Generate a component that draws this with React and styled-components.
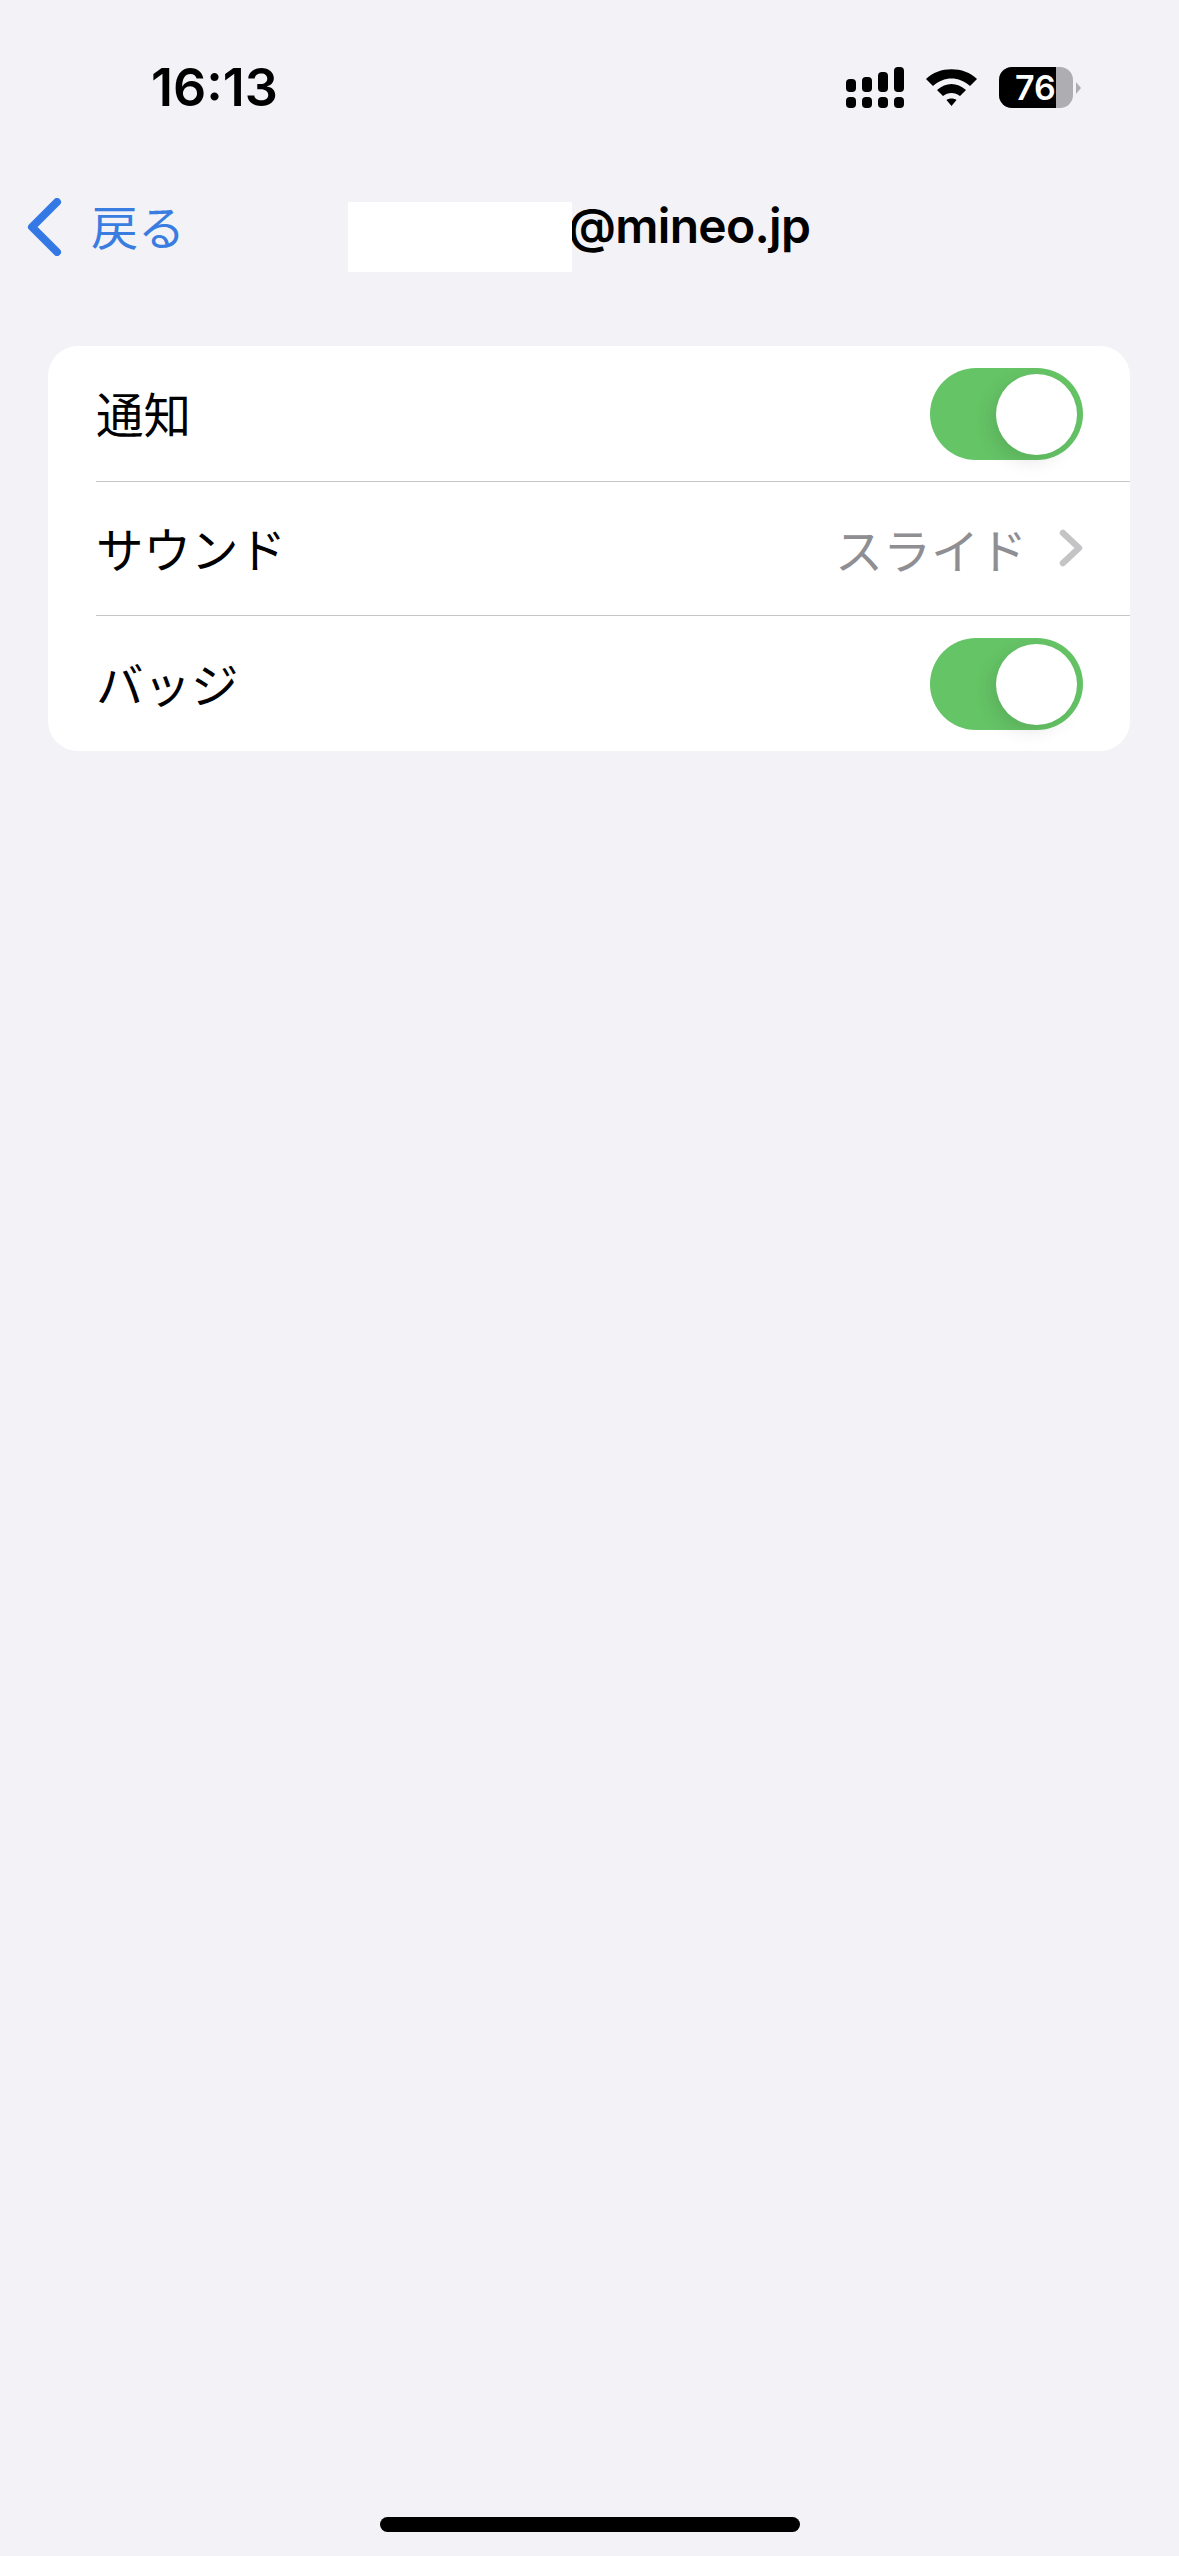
import React from 'react';
import styled, { createGlobalStyle } from 'styled-components';

const GlobalStyle = createGlobalStyle`
    html, body {
        margin: 0;
        padding: 0;
        background: #f2f2f7;
    }
`
const Screen = styled.div`
    width: 1179px;
    height: 2556px;
    display: flex;
    flex-direction: column;
    background: #f2f2f7;
    font-family: Inter, "Noto Sans CJK JP", sans-serif;
    overflow: hidden;
`
const StatusBar = styled.div`
    height: 41px;
    padding: 67px 98px 0 151px;
    display: flex;
    align-items: center;
    justify-content: space-between;
`
const Time = styled.div`
    font-size: 52px;
    font-weight: 600;
    color: #000;
`
const StatusIcons = styled.div`
    display: flex;
    align-items: center;
    gap: 22px;
`
const BatteryGroup = styled.div`
    display: flex;
    align-items: center;
    gap: 3px;
`
const Battery = styled.div`
    width: 74px;
    height: 41px;
    border-radius: 13px;
    overflow: hidden;
    background: #aeaeb2;
`
const BatteryFill = styled.div`
    width: 57px;
    height: 41px;
    padding-left: 16px;
    box-sizing: border-box;
    overflow: hidden;
    white-space: nowrap;
    line-height: 41px;
    font-size: 34px;
    font-weight: 600;
    background: #000;
    color: #fff;
`
const BatteryCap = styled.div`
    width: 0;
    height: 0;
    border-left: 5px solid #aeaeb2;
    border-top: 6px solid transparent;
    border-bottom: 6px solid transparent;
`
const NavBar = styled.div`
    height: 110px;
    margin-top: 64px;
    display: flex;
    align-items: center;
    padding-left: 27px;
`
const BackLabel = styled.span`
    width: 92px;
    margin: 0 0 5px 28px;
    font-family: "Noto Sans CJK JP", sans-serif;
    font-size: 47px;
    white-space: nowrap;
    color: #3a7de0;
`
const Title = styled.div`
    margin-left: 165px;
    display: flex;
    align-items: center;
    color: #000;
`
const Redaction = styled.span`
    position: relative;
    z-index: 1;
    width: 224px;
    height: 70px;
    margin-top: 20px;
    background: #fff;
`
const TitleText = styled.span`
    margin: 0 0 4px -4px;
    font-size: 48px;
    font-weight: 600;
    letter-spacing: -0.7px;
`
const Card = styled.div`
    margin: 64px 49px 0 48px;
    background: #fff;
    border-radius: 30px;
    overflow: hidden;
`
const Row = styled.div`
    height: ${p => p.$height}px;
    box-sizing: border-box;
    margin-left: 48px;
    padding-right: 47px;
    display: flex;
    align-items: center;
    justify-content: space-between;
    border-bottom: ${p => (p.$last ? 'none' : '1px solid #c6c6c8')};
`
const Label = styled.span`
    margin-bottom: 2px;
    font-family: "Noto Sans CJK JP", sans-serif;
    font-size: 47.5px;
    color: #000;
`
const Value = styled.span`
    display: flex;
    align-items: center;
    gap: 32px;
    margin-bottom: 1px;
    font-family: "Noto Sans CJK JP", sans-serif;
    font-size: 48px;
    color: #8e8e93;
`
const Toggle = styled.div`
    width: 153px;
    height: 92px;
    padding: 6px 6px 5px;
    box-sizing: border-box;
    display: flex;
    justify-content: flex-end;
    border-radius: 46px;
    background: #65c466;
`
const Knob = styled.div`
    width: 81px;
    height: 81px;
    border-radius: 50%;
    background: #fff;
    box-shadow: -6px 6px 18px rgba(0, 0, 0, 0.1);
`
const Spacer = styled.div`
    flex: 1;
`
const HomeBar = styled.div`
    width: 420px;
    height: 15px;
    margin: 0 auto 24px;
    border-radius: 8px;
    background: #000;
`

function SignalIcon() {
    return (
        <svg width="58" height="41" viewBox="0 0 58 41">
            <rect x="0" y="12" width="10" height="13" rx="4" />
            <rect x="16" y="10" width="10" height="15" rx="4" />
            <rect x="32" y="5" width="10" height="20" rx="4" />
            <rect x="48" y="0" width="10" height="25" rx="4" />
            <rect x="0" y="30" width="10" height="11" rx="4" />
            <rect x="16" y="30" width="10" height="11" rx="4" />
            <rect x="32" y="30" width="10" height="11" rx="4" />
            <rect x="48" y="30" width="10" height="11" rx="4" />
        </svg>
    )
}

function WifiIcon() {
    return (
        <svg width="51" height="37" viewBox="0 0 51 37">
            <path d="M0 10 C13 -3 38 -3 51 10 L44 17 C33 7 18 7 7 17 Z" />
            <path d="M11 21 C20 13 31 13 40 21 L34 27 C29 23 22 23 17 27 Z" />
            <path d="M20.5 31 C23 29 28 29 30.5 31 L25.5 37 Z" />
        </svg>
    )
}

function BackChevron() {
    return (
        <svg width="36" height="58" viewBox="0 0 36 58">
            <path d="M30 4 L5 29 L30 54" fill="none" stroke="#3478e5" strokeWidth="8" strokeLinecap="round" strokeLinejoin="round" />
        </svg>
    )
}

function RowChevron() {
    return (
        <svg width="24" height="38" viewBox="0 0 24 38">
            <path d="M4 4 L20 19 L4 34" fill="none" stroke="#c4c4c7" strokeWidth="6.5" strokeLinecap="round" strokeLinejoin="round" />
        </svg>
    )
}

function Switch() {
    return <Toggle><Knob /></Toggle>
}

export default function App() {
    return (
        <Screen>
            <GlobalStyle />
            <StatusBar>
                <Time>16:13</Time>
                <StatusIcons>
                    <SignalIcon />
                    <WifiIcon />
                    <BatteryGroup>
                        <Battery>
                            <BatteryFill>76</BatteryFill>
                        </Battery>
                        <BatteryCap />
                    </BatteryGroup>
                </StatusIcons>
            </StatusBar>
            <NavBar>
                <BackChevron />
                <BackLabel>戻る</BackLabel>
                <Title>
                    <Redaction />
                    <TitleText>@mineo.jp</TitleText>
                </Title>
            </NavBar>
            <Card>
                <Row $height={136}>
                    <Label>通知</Label>
                    <Switch />
                </Row>
                <Row $height={134}>
                    <Label>サウンド</Label>
                    <Value>
                        スライド
                        <RowChevron />
                    </Value>
                </Row>
                <Row $height={135} $last>
                    <Label>バッジ</Label>
                    <Switch />
                </Row>
            </Card>
            <Spacer />
            <HomeBar />
        </Screen>
    )
}
